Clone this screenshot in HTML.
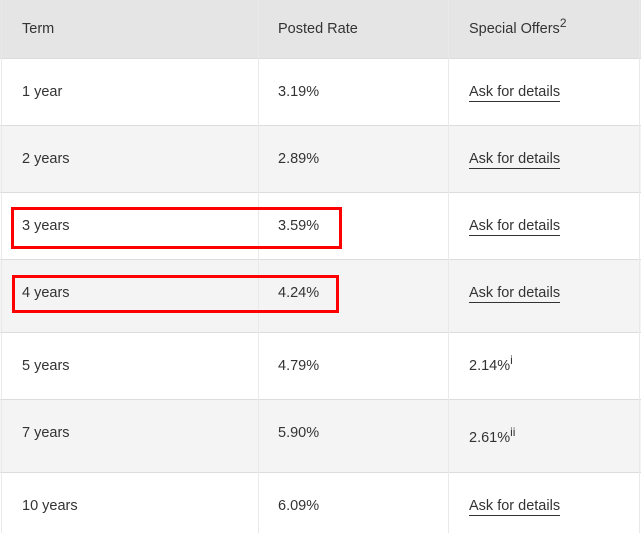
<!DOCTYPE html>
<html><head><style>
body{margin:0;width:641px;height:533px;background:#fff;font-family:"Liberation Sans",sans-serif;font-size:14.5px;color:#333;position:relative;overflow:hidden}
.r{position:absolute;left:0;width:641px;border-bottom:1px solid #dcdcdc;box-sizing:border-box}
.c{position:absolute;top:0;bottom:0;width:1px;background:#e9e9e9}
.t{position:absolute;white-space:nowrap;line-height:18px}
a{color:#333;text-decoration:none;border-bottom:1px solid #333;padding-bottom:1px}
sup{font-size:12px;line-height:0;vertical-align:6px}
.box{position:absolute;border:3px solid #f00;box-sizing:border-box}
</style></head><body>
<div class="r" style="top:0;height:59px;background:#e5e5e5"></div>
<div class="r" style="top:59px;height:67px;background:#fff"></div>
<div class="r" style="top:126px;height:67px;background:#f4f4f4"></div>
<div class="r" style="top:193px;height:67px;background:#fff"></div>
<div class="r" style="top:260px;height:73px;background:#f4f4f4"></div>
<div class="r" style="top:333px;height:67px;background:#fff"></div>
<div class="r" style="top:400px;height:73px;background:#f4f4f4"></div>
<div class="r" style="top:473px;height:60px;background:#fff;border:none"></div>
<div class="c" style="left:258px"></div>
<div class="c" style="left:448px"></div>
<div class="c" style="left:1px"></div>
<div class="c" style="left:639px"></div>

<div class="t" style="left:22px;top:20px">Term</div>
<div class="t" style="left:278px;top:20px">Posted Rate</div>
<div class="t" style="left:469px;top:20px">Special Offers<sup>2</sup></div>

<div class="t" style="left:22px;top:83px">1 year</div>
<div class="t" style="left:278px;top:83px">3.19%</div>
<div class="t" style="left:469px;top:83px"><a>Ask for details</a></div>

<div class="t" style="left:22px;top:150px">2 years</div>
<div class="t" style="left:278px;top:150px">2.89%</div>
<div class="t" style="left:469px;top:150px"><a>Ask for details</a></div>

<div class="t" style="left:22px;top:217px">3 years</div>
<div class="t" style="left:278px;top:217px">3.59%</div>
<div class="t" style="left:469px;top:217px"><a>Ask for details</a></div>

<div class="t" style="left:22px;top:284px">4 years</div>
<div class="t" style="left:278px;top:284px">4.24%</div>
<div class="t" style="left:469px;top:284px"><a>Ask for details</a></div>

<div class="t" style="left:22px;top:357px">5 years</div>
<div class="t" style="left:278px;top:357px">4.79%</div>
<div class="t" style="left:469px;top:357px">2.14%<sup>i</sup></div>

<div class="t" style="left:22px;top:424px">7 years</div>
<div class="t" style="left:278px;top:424px">5.90%</div>
<div class="t" style="left:469px;top:429px">2.61%<sup>ii</sup></div>

<div class="t" style="left:22px;top:497px">10 years</div>
<div class="t" style="left:278px;top:497px">6.09%</div>
<div class="t" style="left:469px;top:497px"><a>Ask for details</a></div>

<div class="box" style="left:11px;top:207px;width:331px;height:42px"></div>
<div class="box" style="left:12px;top:275px;width:327px;height:38px"></div>
</body></html>
